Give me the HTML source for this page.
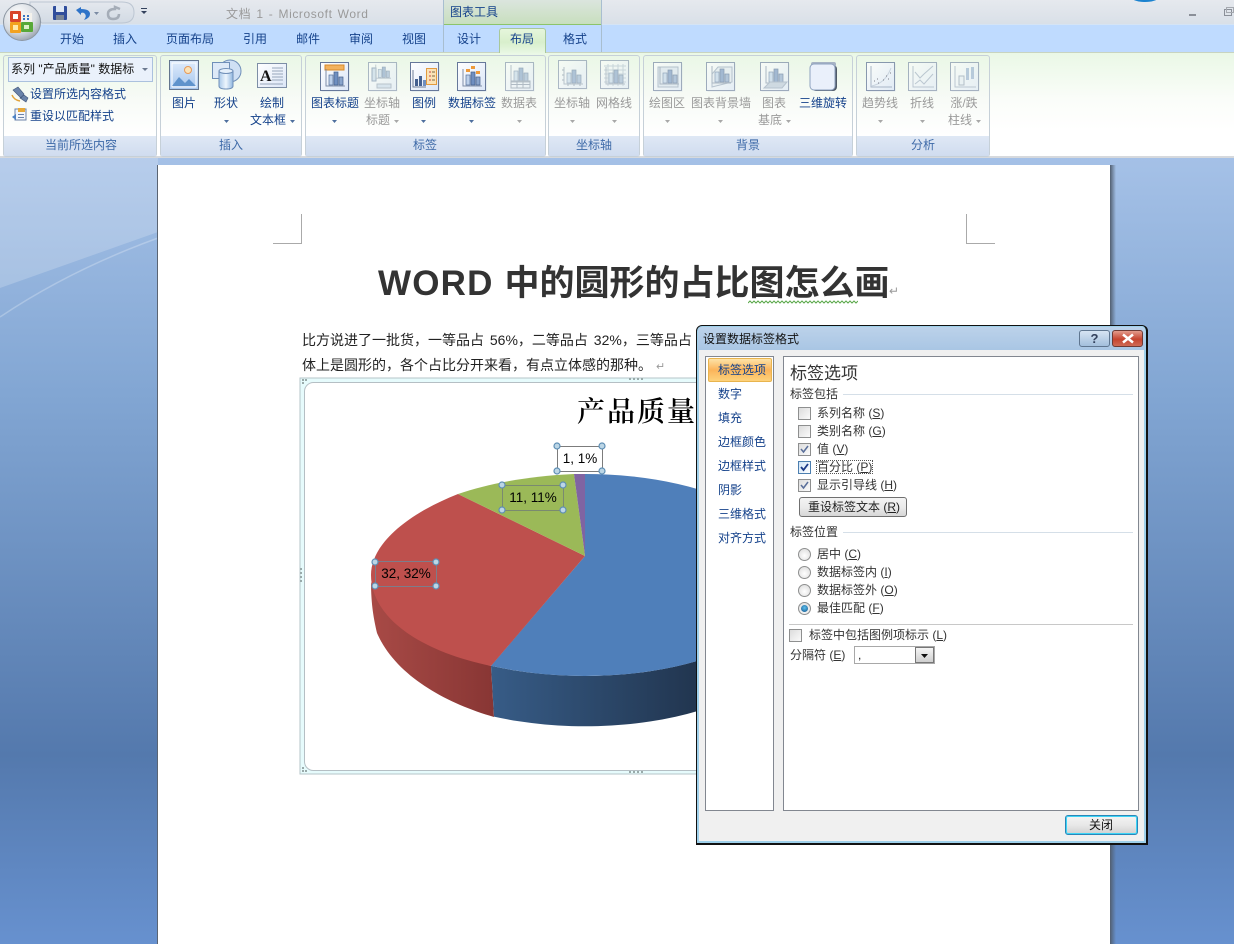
<!DOCTYPE html>
<html><head><meta charset="utf-8">
<style>
html,body{margin:0;padding:0;background:#6a94cc}
#w{position:relative;width:1234px;height:944px;overflow:hidden;font-family:"Liberation Sans","Noto Sans CJK SC",sans-serif;font-size:12px;color:#000}
.a{position:absolute}
.t{position:absolute;white-space:nowrap;line-height:20px;height:20px}
.c{transform:translateX(-50%)}
.tab{color:#15428b;top:29px}
.lb{color:#15428b;top:93px}
.l2{color:#15428b;top:110px}
.d{color:#9a9a9a}
.gl{color:#3e6aa8;top:135px}
.g{position:absolute;top:55px;height:100px;border:1px solid #c6d0d8;border-radius:3px;background:linear-gradient(#eaf7e6,#f8fbf7 45%,#fff 80%);box-sizing:content-box}
.g i{position:absolute;left:0;right:0;bottom:0;height:20px;background:linear-gradient(#dfe8f5,#d0dcef)}
.dl{color:#15428b;left:718px}
.dt{color:#333;left:817px}
.cb{position:absolute;left:798px;width:11px;height:11px;border:1px solid #8e8f8f;background:linear-gradient(135deg,#dcdcdc,#fbfbfb)}
.rd{position:absolute;left:798px;width:11px;height:11px;border:1px solid #8e8f8f;border-radius:50%;background:radial-gradient(circle at 50% 60%,#fff,#d8d8d8)}
.sep{position:absolute;height:1px;background:#d5dfe8}
</style></head><body><div id="w">

<!-- workspace background -->
<svg class="a" style="left:0;top:0" width="1234" height="944">
<defs>
<linearGradient id="bg" x1="0" y1="157" x2="0" y2="944" gradientUnits="userSpaceOnUse">
<stop offset="0" stop-color="#a5c1e7"/><stop offset=".3" stop-color="#82a6d3"/><stop offset=".76" stop-color="#5479ad"/><stop offset="1" stop-color="#6791cf"/></linearGradient>
</defs>
<rect width="1234" height="944" fill="url(#bg)"/>
<path d="M0 157H158V232L0 288Z" fill="#fff" opacity=".2"/>
<path d="M0 317Q70 270 158 238" fill="none" stroke="#fff" stroke-width="1.5" opacity=".25"/>
</svg>

<!-- page -->
<div class="a" style="left:157px;top:165px;width:953px;height:779px;background:#fff;border-left:1px solid #5a6472;box-sizing:border-box"></div>
<div class="a" style="left:1110px;top:165px;width:6px;height:779px;background:linear-gradient(90deg,#525f70,rgba(80,90,110,0))"></div>

<!-- crop marks -->
<div class="a" style="left:273px;top:214px;width:28px;height:29px;border-right:1px solid #aaa;border-bottom:1px solid #aaa"></div>
<div class="a" style="left:966px;top:214px;width:28px;height:29px;border-left:1px solid #aaa;border-bottom:1px solid #aaa"></div>

<!-- heading -->
<div class="t" style="left:378px;top:259px;font-size:35px;line-height:50px;height:50px;font-weight:bold;color:#333"><span style="letter-spacing:1.2px">WORD </span>中的圆形的占比图怎么画</div>
<svg class="a" style="left:748px;top:300px" width="110" height="5"><path d="M0 3l2-2 2 2 2-2 2 2 2-2 2 2 2-2 2 2 2-2 2 2 2-2 2 2 2-2 2 2 2-2 2 2 2-2 2 2 2-2 2 2 2-2 2 2 2-2 2 2 2-2 2 2 2-2 2 2 2-2 2 2 2-2 2 2 2-2 2 2 2-2 2 2 2-2 2 2 2-2 2 2 2-2 2 2 2-2 2 2 2-2 2 2 2-2 2 2 2-2 2 2 2-2 2 2 2-2 2 2 2-2" fill="none" stroke="#5aa84a"/></svg>
<div class="t" style="left:889px;top:281px;color:#999;font-size:12px">↵</div>

<!-- body text -->
<div class="t" style="left:302px;top:330px;font-size:14px;color:#222;word-spacing:2px">比方说进了一批货，一等品占 56%，二等品占 32%，三等品占</div>
<div class="t" style="left:302px;top:355px;font-size:14px;color:#222">体上是圆形的，各个占比分开来看，有点立体感的那种。<span style="color:#999;font-size:11px;margin-left:4px">↵</span></div>

<!-- chart -->
<svg class="a" style="left:0;top:0" width="1234" height="944">
<defs>
<linearGradient id="rs" x1="371" x2="494" y1="0" y2="0" gradientUnits="userSpaceOnUse"><stop offset="0" stop-color="#a84a46"/><stop offset="1" stop-color="#883634"/></linearGradient>
<linearGradient id="bs" x1="491" x2="720" y1="0" y2="0" gradientUnits="userSpaceOnUse"><stop offset="0" stop-color="#375c87"/><stop offset="1" stop-color="#1f3149"/></linearGradient>
</defs>
<rect x="300" y="378" width="700" height="396" fill="#e6fbfc" stroke="#b5c4c8"/>
<rect x="304.5" y="382.5" width="700" height="388" rx="9" fill="#fff" stroke="#b5bfc4"/>
<g fill="#9aa">
<rect x="302" y="379" width="2" height="2"/><rect x="305" y="379" width="2" height="2"/><rect x="302" y="382" width="2" height="2"/>
<rect x="302" y="767" width="2" height="2"/><rect x="302" y="770" width="2" height="2"/><rect x="305" y="770" width="2" height="2"/>
<rect x="629" y="378" width="2" height="2"/><rect x="633" y="378" width="2" height="2"/><rect x="637" y="378" width="2" height="2"/><rect x="641" y="378" width="2" height="2"/>
<rect x="629" y="771" width="2" height="2"/><rect x="633" y="771" width="2" height="2"/><rect x="637" y="771" width="2" height="2"/><rect x="641" y="771" width="2" height="2"/>
<rect x="300" y="568" width="2" height="2"/><rect x="300" y="572" width="2" height="2"/><rect x="300" y="576" width="2" height="2"/><rect x="300" y="580" width="2" height="2"/>
</g>
<!-- sides -->
<path d="M371 582C371 605 374 620 377 633C395 675 445 703 494 717L491 666C440 650 385 625 371 582Z" fill="url(#rs)"/>
<path d="M491 666L494 716.600A214 102 0 0 0 799 625V575A214 101 0 0 1 491 665.700Z" fill="url(#bs)"/>
<!-- top faces -->
<path d="M585 556L585 474A214 101 0 1 1 491 665.700Z" fill="#4f7fba"/>
<path d="M585 556L491 666C415 650 371 615 371 575C371 545 405 515 458 494Z" fill="#be504d"/>
<path d="M585 556L458 494C490 483 530 476 574 474Z" fill="#9bb958"/>
<path d="M585 556L574 474L585 474Z" fill="#8064a2"/>
<!-- label boxes -->
<rect x="557.5" y="446.5" width="45" height="25" fill="#fff" stroke="#7c7c7c"/>
<rect x="502.5" y="485.5" width="61" height="25" fill="none" stroke="#7a8a70"/>
<rect x="375.5" y="561.5" width="61" height="25" fill="none" stroke="#7d7d8a"/>
<g fill="#bcd6e6" stroke="#5f8fb5" stroke-width="1.2">
<circle cx="557" cy="446" r="3"/><circle cx="602" cy="446" r="3"/><circle cx="557" cy="471" r="3"/><circle cx="602" cy="471" r="3"/>
<circle cx="502" cy="485" r="3"/><circle cx="563" cy="485" r="3"/><circle cx="502" cy="510" r="3"/><circle cx="563" cy="510" r="3"/>
<circle cx="375" cy="562" r="3"/><circle cx="436" cy="562" r="3"/><circle cx="375" cy="586" r="3"/><circle cx="436" cy="586" r="3"/>
</g>
</svg>
<div class="t" style="left:577px;top:393px;font-size:28px;line-height:40px;height:40px;font-family:'Liberation Serif','Noto Serif CJK SC',serif;font-weight:600;color:#000;letter-spacing:2px">产品质量</div>
<div class="t c" style="left:580px;top:449px;font-size:13.500px">1, 1%</div>
<div class="t c" style="left:533px;top:488px;font-size:13.500px">11, 11%</div>
<div class="t c" style="left:406px;top:564px;font-size:13.500px">32, 32%</div>

<!-- title bar -->
<div class="a" style="left:0;top:0;width:1234px;height:25px;background:linear-gradient(#e6e9ee,#d9e0e8);border-bottom:1px solid #d5e4f5;box-sizing:border-box"></div>
<div class="a" style="left:0;top:25px;width:1234px;height:28px;background:#bfdbff"></div>
<div class="a" style="left:1131px;top:-8px;width:28px;height:10px;border-radius:50%;background:#1b82cf"></div>
<div class="a" style="left:1189px;top:14px;width:7px;height:2px;background:#8a8f98"></div>
<div class="a" style="left:1224px;top:9px;width:6px;height:5px;border:1px solid #8a8f98"></div>
<div class="a" style="left:1226px;top:7px;width:6px;height:4px;border:1px solid #a5a9b0"></div>
<div class="t" style="left:226px;top:4px;font-size:12px;color:#9a9a9a;letter-spacing:.6px;word-spacing:1.200px">文档 1 - Microsoft Word</div>

<!-- chart tools tab -->
<div class="a" style="left:443px;top:0;width:158px;height:25px;background:linear-gradient(#dbe5de,#c8dfbe);border-bottom:1px solid #8cc46a;box-sizing:border-box"></div>
<div class="a" style="left:443px;top:0;width:1px;height:52px;background:#a8bed0"></div>
<div class="a" style="left:601px;top:0;width:1px;height:52px;background:#a8bed0"></div>
<div class="t" style="left:450px;top:2px;color:#15428b">图表工具</div>

<!-- ribbon -->
<div class="a" style="left:0;top:52px;width:1234px;height:106px;background:linear-gradient(#eaf8e6,#fafdf9 45%,#fff 75%);border-top:1px solid #c8d4c0;border-bottom:2px solid #d6d9dd;box-sizing:border-box"></div>
<div class="a" style="left:499px;top:28px;width:47px;height:25px;background:linear-gradient(#e6f6dc,#d8efcc 55%,#e8f7e3);border:1px solid #a8c89a;border-bottom:0;border-radius:3px 3px 0 0;box-sizing:border-box"></div>

<div class="t c tab" style="left:72px">开始</div>
<div class="t c tab" style="left:125px">插入</div>
<div class="t c tab" style="left:190px">页面布局</div>
<div class="t c tab" style="left:255px">引用</div>
<div class="t c tab" style="left:308px">邮件</div>
<div class="t c tab" style="left:361px">审阅</div>
<div class="t c tab" style="left:414px">视图</div>
<div class="t c tab" style="left:469px">设计</div>
<div class="t c tab" style="left:522px">布局</div>
<div class="t c tab" style="left:575px">格式</div>

<!-- groups -->
<div class="g" style="left:3px;width:152px"><i></i></div>
<div class="g" style="left:160px;width:140px"><i></i></div>
<div class="g" style="left:305px;width:239px"><i></i></div>
<div class="g" style="left:548px;width:90px"><i></i></div>
<div class="g" style="left:643px;width:208px"><i></i></div>
<div class="g" style="left:856px;width:132px"><i></i></div>

<div class="t c gl" style="left:81px">当前所选内容</div>
<div class="t c gl" style="left:231px">插入</div>
<div class="t c gl" style="left:425px">标签</div>
<div class="t c gl" style="left:594px">坐标轴</div>
<div class="t c gl" style="left:748px">背景</div>
<div class="t c gl" style="left:923px">分析</div>

<!-- group 1 -->
<div class="a" style="left:8px;top:57px;width:145px;height:25px;background:#eaf1fb;border:1px solid #abc1de;box-sizing:border-box"></div>
<div class="t" style="left:11px;top:59px;color:#111">系列 "产品质量" 数据标</div>
<div class="t" style="left:30px;top:84px;color:#15428b">设置所选内容格式</div>
<div class="t" style="left:30px;top:106px;color:#15428b">重设以匹配样式</div>

<!-- ribbon labels -->
<div class="t c lb" style="left:184px">图片</div>
<div class="t c lb" style="left:226px">形状</div>
<div class="t c lb" style="left:272px">绘制</div>
<div class="t c l2" style="left:268px">文本框</div>
<div class="t c lb" style="left:335px">图表标题</div>
<div class="t c lb d" style="left:382px;color:#9a9a9a">坐标轴</div>
<div class="t c l2 d" style="left:378px;color:#9a9a9a">标题</div>
<div class="t c lb" style="left:424px">图例</div>
<div class="t c lb" style="left:472px">数据标签</div>
<div class="t c lb d" style="left:519px;color:#9a9a9a">数据表</div>
<div class="t c lb d" style="left:572px;color:#9a9a9a">坐标轴</div>
<div class="t c lb d" style="left:614px;color:#9a9a9a">网格线</div>
<div class="t c lb d" style="left:667px;color:#9a9a9a">绘图区</div>
<div class="t c lb d" style="left:721px;color:#9a9a9a">图表背景墙</div>
<div class="t c lb d" style="left:774px;color:#9a9a9a">图表</div>
<div class="t c l2 d" style="left:770px;color:#9a9a9a">基底</div>
<div class="t c lb" style="left:823px">三维旋转</div>
<div class="t c lb d" style="left:880px;color:#9a9a9a">趋势线</div>
<div class="t c lb d" style="left:922px;color:#9a9a9a">折线</div>
<div class="t c lb d" style="left:964px;color:#9a9a9a">涨/跌</div>
<div class="t c l2 d" style="left:960px;color:#9a9a9a">柱线</div>

<!-- icons -->
<svg class="a" style="left:0;top:0" width="1234" height="160">
<defs>
<linearGradient id="ic" x1="0" y1="0" x2="1" y2="1"><stop offset="0" stop-color="#fff"/><stop offset="1" stop-color="#dbe6f7"/></linearGradient>
<linearGradient id="cy" x1="0" x2="1" y1="0" y2="0"><stop offset="0" stop-color="#a9c9ea"/><stop offset=".5" stop-color="#eef6fd"/><stop offset="1" stop-color="#8fb6e0"/></linearGradient>
<linearGradient id="sky" x1="0" x2="0" y1="0" y2="1"><stop offset="0" stop-color="#dbe9fb"/><stop offset="1" stop-color="#a9c8ee"/></linearGradient>
<radialGradient id="ob" cx=".4" cy=".3" r=".8"><stop offset="0" stop-color="#fff"/><stop offset=".6" stop-color="#d5dae0"/><stop offset="1" stop-color="#8a95a3"/></radialGradient>
<linearGradient id="cap" x1="0" x2="0" y1="0" y2="1"><stop offset="0" stop-color="#e4e8ee"/><stop offset="1" stop-color="#d2dae4"/></linearGradient>
<symbol id="fr" overflow="visible"><rect x="1.5" y="1.5" width="28" height="28" fill="#bcc8dc" opacity=".5"/><rect x=".5" y=".5" width="28" height="28" fill="url(#ic)" stroke="#66789a"/></symbol>
<symbol id="bars" overflow="visible"><path d="M6 7V24H25" fill="none" stroke="#7f8ea8"/><rect x="9" y="13" width="4" height="10" fill="#bcd0ea" stroke="#56709a" stroke-width=".7"/><rect x="14" y="10" width="4" height="13" fill="#6f8fc0" stroke="#46608a" stroke-width=".7"/><rect x="19" y="15" width="4" height="8" fill="#8aa5cc" stroke="#46608a" stroke-width=".7"/></symbol>
</defs>

<!-- QAT capsule + office button -->
<path d="M30 2H122Q134 2 134 12.500Q134 23 122 23H42L30 12Z" fill="url(#cap)" stroke="#bcc6d2"/>
<circle cx="22" cy="22" r="18.500" fill="url(#ob)" stroke="#8c96a2"/>
<rect x="10" y="11" width="11" height="11" rx="1" fill="#d8452c"/><rect x="13" y="14" width="5" height="5" fill="#fff"/>
<rect x="21" y="13" width="11" height="9" fill="#f4f2ec"/>
<rect x="10" y="22" width="11" height="11" rx="1" fill="#f2a21f"/><rect x="13" y="25" width="5" height="5" fill="#ffe9a8"/>
<rect x="21" y="22" width="12" height="10" rx="1" fill="#58a838"/><rect x="24" y="25" width="5" height="4" fill="#dff0c8"/>
<rect x="23" y="15" width="2" height="2" fill="#3a75c4"/><rect x="27" y="15" width="2" height="2" fill="#3a75c4"/><rect x="23" y="18" width="2" height="2" fill="#3a75c4"/><rect x="27" y="18" width="2" height="2" fill="#3a75c4"/>

<!-- QAT -->
<rect x="53" y="6" width="14" height="14" rx="1" fill="#2f4d9c"/><rect x="56" y="6" width="8" height="6" fill="#dfe8f5"/><rect x="56" y="15" width="8" height="5" fill="#7a8698"/>
<path d="M76 10L81 7V9Q90 9 90 14Q90 18 84 20Q87 16 85 14Q84 12 81 13V15Z" fill="#2e73c8"/>
<path d="M94 12h5l-2.500 3z" fill="#7b8ba4"/>
<path d="M120 9L115 7V9Q108 9 108 14Q108 19 113 19Q119 19 119 14" fill="none" stroke="#a5adb8" stroke-width="2.500"/>
<rect x="141" y="8" width="6" height="1" fill="#33415c"/><path d="M141 11h6l-3 3z" fill="#33415c"/>

<!-- selection dropdown & group 1 icons -->
<path d="M142 68h6l-3 3z" fill="#6c7a90"/>
<path d="M13 90l5-3 6 7-3 4zM20 98l4-3 4 3-2 4z" fill="#6a83aa" stroke="#41567a" stroke-width=".6"/>
<path d="M12 95q2 5 8 6" stroke="#e2a33a" fill="none" stroke-width="1.500"/>
<rect x="15" y="109" width="11" height="11" fill="#f3f6fb" stroke="#6c83a8"/><rect x="18" y="108" width="7" height="4" fill="#e7a93a"/><path d="M12 117l4-3v6z" fill="#4e82c4"/><rect x="18" y="114" width="6" height="1" fill="#6c83a8"/><rect x="18" y="117" width="6" height="1" fill="#6c83a8"/>

<!-- 图片 -->
<rect x="169.500" y="60.500" width="29" height="29" fill="url(#sky)" stroke="#63758e"/>
<rect x="172" y="63" width="24" height="24" fill="url(#sky)" stroke="#fff"/>
<circle cx="188" cy="70" r="3.500" fill="#fbe3b8" stroke="#e89a58"/>
<path d="M172 86l7-9 6 6 4-4 7 7z" fill="#5f93cc"/>
<!-- 形状 -->
<circle cx="230" cy="71" r="11" fill="#cfe0f4" stroke="#6f8fb8"/>
<rect x="212.500" y="62.500" width="17" height="16" fill="#dde9f7" stroke="#6f8fb8"/>
<path d="M219 71v15q0 3 7 3t7-3V71z" fill="url(#cy)" stroke="#6f8fb8"/><ellipse cx="226" cy="71" rx="7" ry="2.500" fill="#e5f0fb" stroke="#6f8fb8"/>
<!-- 文本框 -->
<rect x="257.500" y="63.500" width="29" height="24" fill="url(#ic)" stroke="#7d8ea6"/>
<text x="260" y="81" font-family="Liberation Serif" font-size="16" font-weight="bold" fill="#111">A</text>
<path d="M272 68h11M272 71h11M272 74h11M272 77h11M272 80h11M260 84h23" stroke="#97a6bb"/>

<!-- 图表标题 -->
<g transform="translate(320,62)"><use href="#fr"/><rect x="5" y="3" width="19" height="5" fill="#f2b25e" stroke="#d88a2a"/><use href="#bars"/></g>
<!-- 坐标轴标题 disabled -->
<g transform="translate(368,62)" opacity=".5"><use href="#fr"/><rect x="4" y="6" width="4" height="13" fill="#bcd0ea" stroke="#56709a"/><use href="#bars" transform="translate(3,-3) scale(.8)"/><rect x="9" y="22" width="14" height="4" fill="#bcd0ea" stroke="#7f8ea8"/></g>
<!-- 图例 -->
<g transform="translate(410,62)"><use href="#fr"/><path d="M3 8V25H16" fill="none" stroke="#6f7e98"/><rect x="5" y="17" width="3" height="7" fill="#44608f"/><rect x="9" y="14" width="3" height="10" fill="#44608f"/><rect x="13" y="18" width="3" height="6" fill="#6f8fc0"/><rect x="16.500" y="6.500" width="10" height="16" fill="#fbe2b5" stroke="#e29a3e"/><path d="M19 10h2M19 14h2M19 18h2" stroke="#c44"/><path d="M22 10h3M22 14h3M22 18h3" stroke="#7b6a45"/></g>
<!-- 数据标签 -->
<g transform="translate(457,62)"><use href="#fr"/><use href="#bars"/><rect x="9" y="7" width="4" height="3" fill="#ee9a3a"/><rect x="14" y="4" width="4" height="3" fill="#ee9a3a"/><rect x="19" y="9" width="4" height="3" fill="#ee9a3a"/></g>
<!-- 数据表 -->
<g transform="translate(505,62)" opacity=".5"><use href="#fr"/><use href="#bars" transform="translate(0,-4)"/><path d="M6 19h19v7H6zM6 22.500h19M12 19v7M18 19v7" fill="none" stroke="#6f7e98"/></g>
<!-- 坐标轴 -->
<g transform="translate(558,60)" opacity=".5"><use href="#fr"/><use href="#bars"/><path d="M4 10h2M4 15h2M4 20h2M10 26v-2M16 26v-2M22 26v-2" stroke="#6f7e98"/></g>
<!-- 网格线 -->
<g transform="translate(600,60)" opacity=".5"><use href="#fr"/><path d="M4 6h22M4 10h22M4 14h22M4 18h22M4 22h22M8 4v22M13 4v22M18 4v22M23 4v22" stroke="#a3b3ca"/><use href="#bars"/></g>
<!-- 绘图区 -->
<g transform="translate(653,62)" opacity=".6"><use href="#fr"/><rect x="5" y="5" width="20" height="20" fill="#d8e2f0" stroke="#8f9fb8"/><use href="#bars" transform="translate(1,-2)"/></g>
<!-- 图表背景墙 -->
<g transform="translate(706,62)" opacity=".6"><use href="#fr"/><path d="M12 5h14v15L6 25V12z" fill="#e1e8f2" stroke="#8f9fb8"/><use href="#bars" transform="translate(0,-3)"/></g>
<!-- 图表基底 -->
<g transform="translate(760,62)" opacity=".6"><use href="#fr"/><use href="#bars" transform="translate(0,-3)"/><path d="M4 26l6-6h17l-5 6z" fill="#b6c4d8" stroke="#8f9fb8"/></g>
<!-- 三维旋转 -->
<rect x="812" y="65" width="25" height="26" rx="4" fill="#505a68"/><rect x="811" y="62" width="25" height="5" rx="2" fill="#a7b3c4"/>
<rect x="810" y="64" width="25" height="26" rx="4" fill="#eaf0fb" stroke="#8ea2bf"/>
<!-- 趋势线 -->
<g transform="translate(866,62)" opacity=".75"><use href="#fr"/><path d="M5 4V25H26" fill="none" stroke="#8f9fb8"/><path d="M5 24Q19 22 25 6" fill="none" stroke="#bcc8da"/><path d="M8 19h1M12 21h1M11 17h1M17 18h1M20 14h1M22 17h1M24 11h1" stroke="#556"/></g>
<!-- 折线 -->
<g transform="translate(908,62)" opacity=".55"><use href="#fr"/><path d="M5 4V25H26" fill="none" stroke="#8f9fb8"/><path d="M7 10l5 6 4-4 9-8M7 22l5-4 4 4 9-10" fill="none" stroke="#8f9fb8"/></g>
<!-- 涨跌柱线 -->
<g transform="translate(950,62)" opacity=".55"><use href="#fr"/><path d="M5 4V25H26" fill="none" stroke="#8f9fb8"/><rect x="9" y="14" width="5" height="9" fill="#e4ecf7" stroke="#7f8ea8"/><rect x="16" y="6" width="3" height="12" fill="#8aa5cc"/><rect x="21" y="5" width="3" height="12" fill="#8aa5cc"/></g>

<!-- arrows -->
<g fill="#4e6f9e">
<path d="M224 120h5l-2.500 3zM290 120h5l-2.500 3zM332 120h5l-2.500 3zM421 120h5l-2.500 3zM469 120h5l-2.500 3z"/>
</g>
<g fill="#a8a8a8">
<path d="M394 120h5l-2.500 3zM517 120h5l-2.500 3zM570 120h5l-2.500 3zM612 120h5l-2.500 3zM665 120h5l-2.500 3zM718 120h5l-2.500 3zM786 120h5l-2.500 3zM878 120h5l-2.500 3zM920 120h5l-2.500 3zM976 120h5l-2.500 3z"/>
</g>
</svg>

<!-- dialog -->
<div class="a" style="left:696px;top:325px;width:452px;height:520px;border:1px solid #111;border-right:2px solid #111;border-bottom:2px solid #111;border-radius:6px 6px 0 0;background:#9fd0ea;box-sizing:border-box"></div>
<div class="a" style="left:698px;top:327px;width:447px;height:23px;background:linear-gradient(#bcd2ea,#a9c6e4);border-radius:4px 4px 0 0"></div>
<div class="a" style="left:699px;top:350px;width:445px;height:491px;background:#f0f0f0"></div>
<div class="t" style="left:703px;top:329px;color:#111;font-size:12px">设置数据标签格式</div>
<div class="a" style="left:1079px;top:330px;width:31px;height:17px;border:1px solid #5f7690;border-radius:3px;background:linear-gradient(#d6e4f3,#a3bfdc);box-sizing:border-box;text-align:center;line-height:15px;font-weight:bold;color:#33415c;font-size:13px">?</div>
<div class="a" style="left:1112px;top:330px;width:31px;height:17px;border:1px solid #6e3a34;border-radius:3px;background:linear-gradient(#e39b8c,#c5442f 55%,#cf6a55);box-sizing:border-box"></div>
<svg class="a" style="left:1120px;top:333px" width="16" height="11"><path d="M3 1.500l10 8M13 1.500l-10 8" stroke="#fff" stroke-width="2.500"/></svg>

<div class="a" style="left:705px;top:356px;width:69px;height:455px;background:#fff;border:1px solid #828790;box-sizing:border-box"></div>
<div class="a" style="left:783px;top:356px;width:356px;height:455px;background:#fff;border:1px solid #828790;box-sizing:border-box"></div>
<div class="a" style="left:708px;top:358px;width:64px;height:24px;background:linear-gradient(#fde3a8,#fbb45a 50%,#fdd27c);border:1px solid #e8b44e;border-radius:2px;box-sizing:border-box"></div>

<div class="t dl" style="top:360px">标签选项</div>
<div class="t dl" style="top:384px">数字</div>
<div class="t dl" style="top:408px">填充</div>
<div class="t dl" style="top:432px">边框颜色</div>
<div class="t dl" style="top:456px">边框样式</div>
<div class="t dl" style="top:480px">阴影</div>
<div class="t dl" style="top:504px">三维格式</div>
<div class="t dl" style="top:528px">对齐方式</div>

<div class="t" style="left:790px;top:364px;font-size:17px;line-height:20px;height:20px;color:#333">标签选项</div>
<div class="t" style="left:790px;top:384px;color:#333">标签包括</div>
<div class="sep" style="left:843px;top:394px;width:290px"></div>

<div class="cb" style="top:407px"></div>
<div class="cb" style="top:425px"></div>
<div class="cb" style="top:443px"></div>
<div class="cb" style="top:461px;background:linear-gradient(135deg,#cfe4f8,#fff);border-color:#4c7fb0"></div>
<div class="cb" style="top:479px"></div>
<svg class="a" style="left:798px;top:407px" width="13" height="90"><path d="M3 42l2.500 3 4.500-6M3 78l2.500 3 4.500-6" fill="none" stroke="#5a6f9a" stroke-width="1.500"/><path d="M3 60l2.500 3 4.500-6" fill="none" stroke="#1a3a88" stroke-width="1.800"/></svg>

<div class="t dt" style="top:403px">系列名称 (<u>S</u>)</div>
<div class="t dt" style="top:421px">类别名称 (<u>G</u>)</div>
<div class="t dt" style="top:439px">值 (<u>V</u>)</div>
<div class="a" style="left:816px;top:460px;width:57px;height:14px;border:1px dotted #555;box-sizing:border-box"></div>
<div class="t dt" style="top:457px">百分比 (<u>P</u>)</div>
<div class="t dt" style="top:475px">显示引导线 (<u>H</u>)</div>

<div class="a" style="left:799px;top:497px;width:108px;height:20px;border:1px solid #707070;border-radius:3px;background:linear-gradient(#f4f4f4,#ebebeb 50%,#d6d6d6);box-sizing:border-box"></div>
<div class="t" style="left:808px;top:497px;color:#222">重设标签文本 (<u>R</u>)</div>

<div class="t" style="left:790px;top:522px;color:#333">标签位置</div>
<div class="sep" style="left:843px;top:532px;width:290px"></div>

<div class="rd" style="top:548px"></div>
<div class="rd" style="top:566px"></div>
<div class="rd" style="top:584px"></div>
<div class="rd" style="top:602px"></div>
<div class="a" style="left:801px;top:605px;width:7px;height:7px;border-radius:50%;background:radial-gradient(circle at 50% 40%,#5ec0ef,#0e4f86)"></div>

<div class="t dt" style="top:544px">居中 (<u>C</u>)</div>
<div class="t dt" style="top:562px">数据标签内 (<u>I</u>)</div>
<div class="t dt" style="top:580px">数据标签外 (<u>O</u>)</div>
<div class="t dt" style="top:598px">最佳匹配 (<u>F</u>)</div>

<div class="a" style="left:789px;top:624px;width:344px;height:1px;background:#c8c8c8"></div>
<div class="cb" style="left:789px;top:629px"></div>
<div class="t" style="left:809px;top:625px;color:#333">标签中包括图例项标示 (<u>L</u>)</div>
<div class="t" style="left:790px;top:645px;color:#333">分隔符 (<u>E</u>)</div>
<div class="a" style="left:854px;top:646px;width:81px;height:18px;background:#fff;border:1px solid #a8a8a8;box-sizing:border-box"></div>
<div class="a" style="left:915px;top:647px;width:19px;height:16px;background:linear-gradient(#f5f5f5,#cfcfcf);border:1px solid #777;box-sizing:border-box"></div>
<svg class="a" style="left:920px;top:653px" width="10" height="6"><path d="M1 1h7l-3.500 4z" fill="#111"/></svg>
<div class="t" style="left:858px;top:645px;color:#222">,</div>

<div class="a" style="left:1065px;top:815px;width:73px;height:20px;border:1px solid #2a86b8;border-radius:3px;box-shadow:inset 0 0 0 1px #3cd4f6;background:linear-gradient(#f4f4f4,#e8e8e8 50%,#d0d0d0);box-sizing:border-box"></div>
<div class="t c" style="left:1101px;top:815px;color:#111">关闭</div>

</div></body></html>
